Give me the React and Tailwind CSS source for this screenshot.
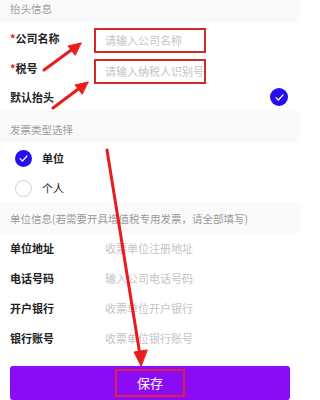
import React from "react";

const Check = ({ className }) => (
  <div className={"flex items-center justify-center rounded-full bg-[#2410ee] " + className}>
    <svg width="9" height="7" viewBox="0 0 9 7" fill="none">
      <path d="M1 3.6 L3.4 6 L8 1" stroke="white" strokeWidth="1.2" strokeLinecap="round" strokeLinejoin="round" />
    </svg>
  </div>
);

const Header = ({ children, className }) => (
  <div className={"flex items-center bg-[#fafafa] px-[10px] text-[10.5px] text-[#9a9a9a] " + className}>{children}</div>
);

const Row = ({ label, placeholder }) => (
  <div className="flex h-[30px] items-center bg-white px-[10px]">
    <div className="w-[95px] text-[11px] font-semibold text-[#222]">{label}</div>
    <div className="text-[11px] text-[#c4c4c4]">{placeholder}</div>
  </div>
);

export default function App() {
  return (
    <div className="relative h-[400px] w-[300px] overflow-hidden bg-white" style={{ fontFamily: '"Noto Sans CJK SC", "Noto Sans", sans-serif' }}>
      <Header className="h-[23px] pb-[6px]">抬头信息</Header>
      <div className="flex h-[30px] items-center px-[10px]">
        <div className="w-[84px] text-[11px] font-semibold text-[#222]"><span className="text-[#e02020]">*</span>公司名称</div>
        <div className="mt-[4px] flex h-[25px] w-[112px] items-center whitespace-nowrap border-2 border-[#d42a2a] pl-[9px] text-[11px] text-[#c4c4c4]">请输入公司名称</div>
      </div>
      <div className="flex h-[30px] items-center px-[10px]">
        <div className="w-[84px] text-[11px] font-semibold text-[#222]"><span className="text-[#e02020]">*</span>税号</div>
        <div className="mt-[6px] flex h-[25px] w-[112px] items-center overflow-hidden whitespace-nowrap border-2 border-[#d42a2a] pl-[9px] text-[11px] text-[#c4c4c4]">请输入纳税人识别号</div>
      </div>
      <div className="flex h-[28px] items-center justify-between pl-[10px] pr-[12px]">
        <div className="text-[11px] font-semibold text-[#222]">默认抬头</div>
        <Check className="h-[18px] w-[18px]" />
      </div>
      <Header className="h-[32px] pt-[6px]">发票类型选择</Header>
      <div className="flex h-[31px] items-center gap-[10px] px-[15px]">
        <Check className="h-[17px] w-[17px]" />
        <div className="text-[11px] font-semibold text-[#222]">单位</div>
      </div>
      <div className="flex h-[28px] items-center gap-[10px] px-[15px]">
        <div className="h-[17px] w-[17px] rounded-full border border-[#cfcfcf]" />
        <div className="text-[11px] text-[#222]">个人</div>
      </div>
      <Header className="h-[31px] pt-[3px]">单位信息(若需要开具增值税专用发票，请全部填写)</Header>
      <Row label="单位地址" placeholder="收票单位注册地址" />
      <Row label="电话号码" placeholder="输入公司电话号码" />
      <Row label="开户银行" placeholder="收票单位开户银行" />
      <Row label="银行账号" placeholder="收票单位银行账号" />
      <div className="px-[10px] pt-[13px]">
        <button className="flex h-[34px] w-full items-center justify-center rounded-[3px] bg-[#8a0cf5]">
          <span className="flex h-[28px] w-[70px] items-center justify-center border-2 border-[#e0204a] text-[13px] text-white">保存</span>
        </button>
      </div>
      <svg className="pointer-events-none absolute left-0 top-0" width="300" height="400" viewBox="0 0 300 400">
        <g stroke="#e81c1c" strokeWidth="3" strokeLinecap="round" fill="#e81c1c">
          <line x1="44" y1="70" x2="74" y2="48" />
          <polygon points="81,43 68,46 75,55" strokeWidth="1" />
          <line x1="53" y1="108" x2="81" y2="87" />
          <polygon points="88,82 75,85 82,94" strokeWidth="1" />
          <line x1="107" y1="150" x2="140" y2="355" />
          <polygon points="141,366 134,352 147,350" strokeWidth="1" />
        </g>
      </svg>
    </div>
  );
}
